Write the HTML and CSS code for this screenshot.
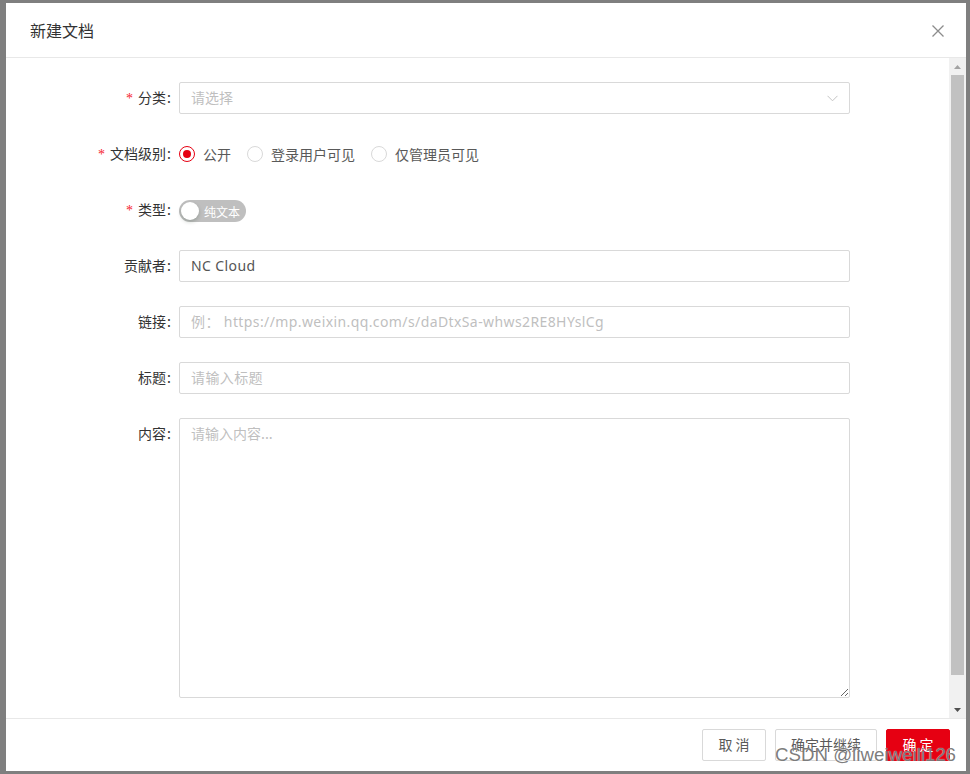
FILE: index.html
```html
<!DOCTYPE html>
<html lang="zh-CN">
<head>
<meta charset="utf-8">
<title>新建文档</title>
<link rel="stylesheet" href="styles.css">
</head>
<body>
<div class="backdrop">
  <div class="modal">
    <div class="modal-header">
      <div class="modal-title">新建文档</div>
      <svg class="close" width="12" height="12" viewBox="0 0 12 12"><path d="M0.5 0.5 L11.5 11.5 M11.5 0.5 L0.5 11.5" stroke="#8c8c8c" stroke-width="1.3" fill="none"/></svg>
    </div>
    <div class="modal-main">
      <div class="modal-body">
        <div class="form-row">
          <div class="label"><span class="req">*</span>分类<span class="colon">:</span></div>
          <div class="control">
            <div class="select">
              <span class="placeholder">请选择</span>
              <svg width="11" height="7" viewBox="0 0 11 7"><path d="M0.5 0.8 L5.5 5.8 L10.5 0.8" stroke="#c4c4c4" stroke-width="1" fill="none"/></svg>
            </div>
          </div>
        </div>
        <div class="form-row">
          <div class="label"><span class="req">*</span>文档级别<span class="colon">:</span></div>
          <div class="control radios">
            <label class="radio"><span class="circle checked"></span><span class="rtext">公开</span></label>
            <label class="radio"><span class="circle"></span><span class="rtext">登录用户可见</span></label>
            <label class="radio"><span class="circle"></span><span class="rtext">仅管理员可见</span></label>
          </div>
        </div>
        <div class="form-row">
          <div class="label"><span class="req">*</span>类型<span class="colon">:</span></div>
          <div class="control">
            <div class="switch"><span class="knob"></span><span class="stext">纯文本</span></div>
          </div>
        </div>
        <div class="form-row">
          <div class="label">贡献者<span class="colon">:</span></div>
          <div class="control"><input class="input" type="text" value="NC Cloud"></div>
        </div>
        <div class="form-row">
          <div class="label">链接<span class="colon">:</span></div>
          <div class="control"><input class="input" type="text" placeholder="例： https://mp.weixin.qq.com/s/daDtxSa-whws2RE8HYslCg"></div>
        </div>
        <div class="form-row">
          <div class="label">标题<span class="colon">:</span></div>
          <div class="control"><input class="input" type="text" placeholder="请输入标题"></div>
        </div>
        <div class="form-row tall">
          <div class="label">内容<span class="colon">:</span></div>
          <div class="control"><textarea class="textarea" placeholder="请输入内容..."></textarea></div>
        </div>
      </div>
      <div class="scrollbar">
        <div class="sb-btn"><svg width="7" height="4" viewBox="0 0 7 4"><path d="M0 4 L3.5 0 L7 4 Z" fill="#a3a3a3"/></svg></div>
        <div class="sb-track"><div class="sb-thumb"></div></div>
        <div class="sb-btn"><svg width="7" height="4" viewBox="0 0 7 4"><path d="M0 0 L7 0 L3.5 4 Z" fill="#505050"/></svg></div>
      </div>
    </div>
    <div class="modal-footer">
      <button class="btn">取 消</button>
      <button class="btn">确定并继续</button>
      <button class="btn primary">确 定</button>
    </div>
  </div>
  <div class="watermark">CSDN @liweiweili126</div>
</div>
</body>
</html>
```

FILE: styles.css
```css
* { box-sizing: border-box; }
html, body { margin: 0; padding: 0; }
body {
  width: 970px;
  height: 774px;
  overflow: hidden;
  font-family: "Noto Sans", "Noto Sans CJK SC", sans-serif;
  font-size: 14px;
}
.backdrop {
  position: relative;
  width: 970px;
  height: 774px;
  background: #7f7f7f;
  padding: 3px 4px 3px 6px;
}
.modal {
  width: 960px;
  height: 768px;
  background: #fff;
  display: flex;
  flex-direction: column;
}
.modal-header {
  height: 55px;
  border-bottom: 1px solid #e8e8e8;
  display: flex;
  align-items: center;
  justify-content: space-between;
  padding: 0 22px 0 24px;
  flex-shrink: 0;
}
.modal-title {
  font-family: "Noto Sans CJK SC", sans-serif;
  font-size: 16px;
  color: #333;
  line-height: 22px;
  margin-top: -1px;
}
.close { margin-top: 2px; }
.modal-main {
  flex: 1;
  display: flex;
  min-height: 0;
}
.modal-body {
  flex: 1;
  padding-top: 24px;
}
.form-row {
  display: grid;
  grid-template-columns: 173px 671px;
  height: 32px;
  margin-bottom: 24px;
}
.form-row.tall { height: 280px; }
.label {
  font-family: "Noto Sans CJK SC", sans-serif;
  color: #333;
  text-align: right;
  line-height: 30px;
  height: 32px;
  white-space: nowrap;
}
.req {
  color: #f5222d;
  font-family: "Liberation Serif", serif;
  margin-right: 5px;
}
.colon {
  margin: 0 8px 0 1px;
}
.control { min-width: 0; }
.select, .input {
  width: 671px;
  height: 32px;
  border: 1px solid #d9d9d9;
  border-radius: 2px;
  background: #fff;
}
.select {
  display: flex;
  align-items: center;
  justify-content: space-between;
  padding: 0 11px 0 11px;
}
.placeholder {
  font-family: "Noto Sans CJK SC", sans-serif;
  color: #bfbfbf;
  margin-top: -2px;
}
.input {
  padding: 0 11px 2px;
  font-family: "Noto Sans", "Noto Sans CJK SC", sans-serif;
  font-size: 14px;
  letter-spacing: 0.4px;
  color: #555;
  outline: none;
}
.input::placeholder, .textarea::placeholder { color: #bfbfbf; }
.textarea {
  display: block;
  width: 671px;
  height: 280px;
  border: 1px solid #d9d9d9;
  border-radius: 2px;
  padding: 3px 11px;
  font-family: "Noto Sans CJK SC", sans-serif;
  font-size: 14px;
  line-height: 22px;
  color: #555;
  outline: none;
  resize: vertical;
}
.radios {
  display: flex;
  align-items: center;
}
.radio {
  display: flex;
  align-items: center;
  margin-right: 8px;
}
.circle {
  width: 16px;
  height: 16px;
  border: 1px solid #d9d9d9;
  border-radius: 50%;
  display: flex;
  align-items: center;
  justify-content: center;
}
.circle.checked { border-color: #e60012; }
.circle.checked::after {
  content: "";
  width: 8px;
  height: 8px;
  border-radius: 50%;
  background: #e60012;
}
.rtext {
  font-family: "Noto Sans CJK SC", sans-serif;
  color: #595959;
  padding: 0 8px;
  line-height: 30px;
}
.switch {
  margin-top: 6px;
  width: 67px;
  height: 22px;
  border-radius: 11px;
  background: #bfbfbf;
  display: flex;
  align-items: center;
  padding-left: 2px;
}
.knob {
  width: 18px;
  height: 18px;
  border-radius: 50%;
  background: #fff;
  box-shadow: 0 2px 4px rgba(0,35,11,0.2);
}
.stext {
  font-family: "Noto Sans CJK SC", sans-serif;
  font-size: 12px;
  color: #fff;
  margin-left: 5px;
}
.scrollbar {
  width: 17px;
  flex-shrink: 0;
  background: #f1f1f1;
  display: flex;
  flex-direction: column;
}
.sb-btn {
  height: 17px;
  display: flex;
  align-items: center;
  justify-content: center;
}
.sb-track { flex: 1; padding: 0 2px; }
.sb-thumb { height: 600px; background: #c1c1c1; }
.modal-footer {
  height: 53px;
  border-top: 1px solid #e8e8e8;
  display: flex;
  justify-content: flex-end;
  align-items: center;
  gap: 9px;
  padding: 0 16px 0 0;
  flex-shrink: 0;
}
.btn {
  height: 32px;
  padding: 0 15px 2px;
  min-width: 64px;
  border: 1px solid #d9d9d9;
  border-radius: 2px;
  background: #fff;
  font-family: "Noto Sans CJK SC", sans-serif;
  font-size: 14px;
  color: #595959;
}
.btn.primary {
  background: #e60012;
  border-color: #e60012;
  color: #fff;
}
.watermark {
  position: absolute;
  left: 775px;
  top: 744px;
  font-family: "Liberation Sans", sans-serif;
  font-size: 18.7px;
  color: rgba(90,90,90,0.8);
  text-shadow: 0 0 1px #fff;
  white-space: nowrap;
}
```
